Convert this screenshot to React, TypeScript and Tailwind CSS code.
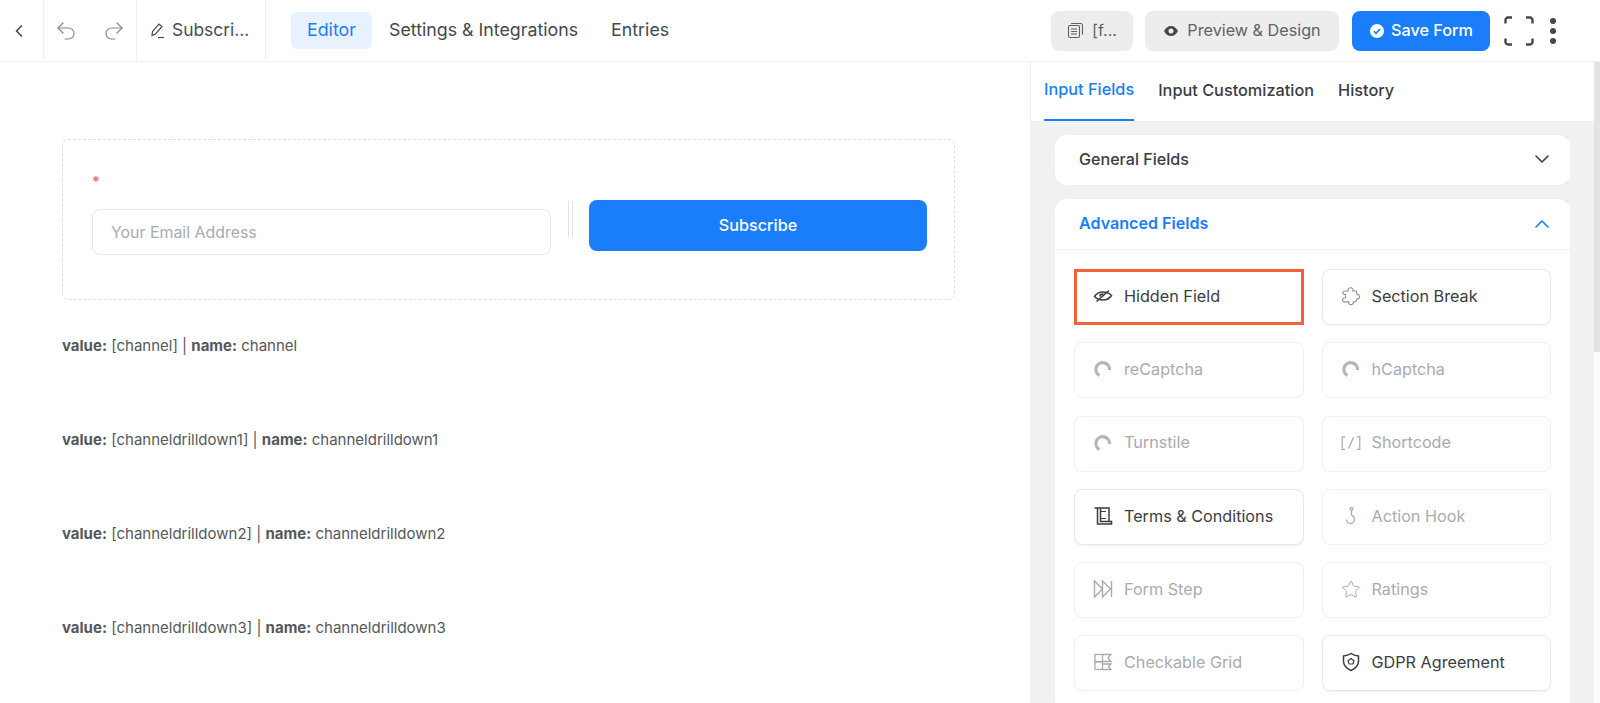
import { ChevronDown, ChevronLeft, ChevronUp, Star, Undo2, Redo2 } from "lucide-react";

const FIELDS = [
  { label: "Hidden Field", icon: "hidden", active: true, marked: true },
  { label: "Section Break", icon: "puzzle", active: true },
  { label: "reCaptcha", icon: "captcha" },
  { label: "hCaptcha", icon: "captcha" },
  { label: "Turnstile", icon: "captcha" },
  { label: "Shortcode", icon: "shortcode" },
  { label: "Terms & Conditions", icon: "terms", active: true },
  { label: "Action Hook", icon: "hook" },
  { label: "Form Step", icon: "step" },
  { label: "Ratings", icon: "star" },
  { label: "Checkable Grid", icon: "grid" },
  { label: "GDPR Agreement", icon: "shield", active: true },
];

const VALUES = ["channel", "channeldrilldown1", "channeldrilldown2", "channeldrilldown3"];

function FieldIcon({ name }: { name: string }) {
  if (name === "hidden") {
    return (
      <svg width="20" height="20" viewBox="0 0 20 20" fill="none" stroke="currentColor" strokeWidth="1.600">
        <path d="M1.500 10.500c2-3 5-4.500 8.500-4.500 3 0 6 1 8.500 3.500-2 3-5 4.500-8.500 4.500-3 0-6-1-8.500-3.500z" />
        <path d="M7 10.500c0-1.500 1.500-2.500 3.500-2.500" />
        <path d="M3.500 15.500L16 4.500" />
      </svg>
    );
  }
  if (name === "puzzle") {
    return (
      <svg width="22" height="22" viewBox="0 0 22 22" fill="none" stroke="#8f9195" strokeWidth="1.200">
        <path d="M8 5.500c-1-2 .5-3.500 2.500-3.500s3.500 1.500 2.500 3.500h4l.5 4c2-.5 3 1 3 2.500s-1.500 2.500-3 2l-1 3-3 .5c.5 2-1 3-2.500 3s-3-1-2.500-3H3c-1.500-.5-1.500-2-1-3 .5-1 1.500-1.500 3-1.500V9.500c-2 0-3-1-3-2s.5-2 2-2z" />
      </svg>
    );
  }
  if (name === "captcha") {
    return (
      <svg width="20" height="20" viewBox="0 0 20 20" fill="none" stroke="#b4b5b8" strokeWidth="3.200">
        <path d="M6.500 16.500A6.800 6.800 0 1 1 16.500 11" />
      </svg>
    );
  }
  if (name === "shortcode") {
    return (
      <svg width="24" height="20" viewBox="0 0 24 20" fill="none" stroke="currentColor" strokeWidth="1.500">
        <path d="M5 2.500H1.500v15H5M19 2.500h3.500v15H19M15 3.500l-6 13" />
      </svg>
    );
  }
  if (name === "terms") {
    return (
      <svg width="20" height="20" viewBox="0 0 20 20" fill="none" stroke="currentColor" strokeWidth="1.500">
        <path d="M1.500 2H16v13.500M4.500 2v16H18.500v-2.500H7.500V2" />
        <path d="M7.500 5.500H13M7.500 12.500H13" strokeWidth="1" />
      </svg>
    );
  }
  if (name === "hook") {
    return (
      <svg width="20" height="20" viewBox="0 0 20 20" fill="none" stroke="currentColor" strokeWidth="1.300">
        <circle cx="10.500" cy="2.800" r="1.400" />
        <path d="M10.500 4.200V9c2 1 3 2.500 3 4.500a4 4 0 0 1-8 0" />
      </svg>
    );
  }
  if (name === "step") {
    return (
      <svg width="20" height="20" viewBox="0 0 20 20" fill="none" stroke="currentColor" strokeWidth="1.400">
        <path d="M1.500 2v16l8-8zM9.500 2v16l8-8zM18.500 2v16" />
      </svg>
    );
  }
  if (name === "star") return <Star size={21} strokeWidth={1.2} />;
  if (name === "grid") {
    return (
      <svg width="20" height="20" viewBox="0 0 20 20" fill="none" stroke="currentColor" strokeWidth="1.300">
        <rect x="2" y="2.500" width="7.500" height="7" />
        <rect x="2" y="10" width="7.500" height="7.500" />
        <path d="M9.500 2.500H18L15 6l3 3.500H9.500M9.500 12H18l-2.500 2.500L18 17.500H9.500" />
      </svg>
    );
  }
  return (
    <svg width="20" height="20" viewBox="0 0 20 20" fill="none" stroke="currentColor" strokeWidth="1.500">
      <path d="M10 1.500c2 1.500 4.500 2.300 7.500 2.500v5c0 4.500-3 7.500-7.500 9.500-4.500-2-7.500-5-7.500-9.500V4c3-.2 5.500-1 7.500-2.500z" />
      <path d="M10 6.500l3 2.200-1.100 3.300H8.100L7 8.700z" strokeWidth="1.200" />
    </svg>
  );
}

function FieldButton({ field }: { field: (typeof FIELDS)[number] }) {
  return (
    <div
      className={
        "flex h-14 items-center gap-[11px] pb-[2px] text-[16.2px] " +
        (field.marked
          ? "border-[3px] border-[#f4623a] pl-[16px] text-[#3a3d42] "
          : field.active
            ? "rounded-lg border border-[#e7e8ea] pl-[18px] text-[#3a3d42] shadow-[0_1px_2px_rgba(0,0,0,0.06)] "
            : "rounded-lg border border-[#f0f0f1] pl-[18px] text-[#a9abaf] ")
      }
    >
      <span className="flex w-5 shrink-0 justify-center">
        <FieldIcon name={field.icon} />
      </span>
      <span>{field.label}</span>
    </div>
  );
}

export default function App() {
  return (
    <div className="flex h-[703px] flex-col overflow-hidden bg-white font-['Inter',sans-serif] text-[#3a3d42]">
      {/* top bar */}
      <header className="flex h-[62px] shrink-0 items-center border-b border-[#efefef]">
        <div className="flex h-full w-11 items-center justify-start border-r border-[#f0f0f0] pl-[9px] text-[#45484d]">
          <ChevronLeft size={20} strokeWidth={2} />
        </div>
        <div className="flex h-full w-[93px] items-center justify-center gap-[24px] border-r border-[#f0f0f0] text-[#85888d]">
          <Undo2 size={24} strokeWidth={1.2} />
          <Redo2 size={24} strokeWidth={1.2} />
        </div>
        <div className="flex h-full w-[129px] items-center gap-[5px] border-r border-[#f0f0f0] pl-[12px] text-[17.400px] text-[#4a4d52]">
          <svg width="18" height="18" viewBox="0 0 18 18" fill="none" stroke="currentColor" strokeWidth="1.200">
            <path d="M3 13.500l.5-4L10 2l3 2.500-6.500 7.500z" />
            <path d="M9 15.500h6" />
          </svg>
          <span>Subscri...</span>
        </div>
        <nav className="-mt-[1px] ml-[25px] flex items-center text-[17.800px]">
          <span className="flex h-[37px] w-[81px] items-center justify-center rounded-md bg-[#e8f2fe] text-[#1a7efb]">Editor</span>
          <span className="ml-[17px] text-[#45484d]">Settings & Integrations</span>
          <span className="ml-[33px] text-[#45484d]">Entries</span>
        </nav>
        <div className="ml-auto flex items-center text-[16.200px]">
          <div className="flex h-10 w-[82px] items-center justify-center gap-2 rounded-lg bg-[#ededed] text-[#606367]">
            <svg width="17" height="17" viewBox="0 0 17 17" fill="none" stroke="currentColor" strokeWidth="1.100">
              <rect x="1.500" y="3.500" width="11" height="12" rx="1.500" />
              <path d="M4 1.500h9.500a2 2 0 0 1 2 2v9M4 7h6M4 9.500h6M4 12h6" />
            </svg>
            <span>[f...</span>
          </div>
          <div className="ml-3 flex h-10 w-[194px] items-center justify-center gap-2 rounded-lg bg-[#ededed] text-[#606367]">
            <svg width="16" height="16" viewBox="0 0 16 16" fill="#45484d">
              <path d="M8 3c3 0 5.500 2 7 5-1.500 3-4 5-7 5s-5.500-2-7-5c1.500-3 4-5 7-5zm0 2.500a2.500 2.500 0 1 0 0 5 2.500 2.500 0 0 0 0-5z" />
            </svg>
            <span>Preview & Design</span>
          </div>
          <div className="ml-[13px] flex h-10 w-[138px] items-center justify-center gap-[6px] rounded-lg bg-[#1a7efb] font-medium text-white">
            <svg width="16" height="16" viewBox="0 0 16 16">
              <circle cx="8" cy="8" r="7" fill="#fff" />
              <path d="M4.800 8.200l2.200 2.200 4-4.400" fill="none" stroke="#1a7efb" strokeWidth="1.600" />
            </svg>
            <span>Save Form</span>
          </div>
          <svg className="ml-[14px]" width="30" height="30" viewBox="0 0 30 30" fill="none" stroke="#45484d" strokeWidth="2.400">
            <path d="M1.500 7.500V4a2.500 2.500 0 0 1 2.500-2.500h4M22 1.500h4A2.500 2.500 0 0 1 28.500 4v3.500M28.500 22.500V26a2.500 2.500 0 0 1-2.500 2.500h-4M8 28.500H4A2.500 2.500 0 0 1 1.500 26v-3.500" />
          </svg>
          <div className="ml-[16px] mr-[44px] flex flex-col gap-[4px]">
            <span className="h-[6px] w-[6px] rounded-full bg-[#45484d]" />
            <span className="h-[6px] w-[6px] rounded-full bg-[#45484d]" />
            <span className="h-[6px] w-[6px] rounded-full bg-[#45484d]" />
          </div>
        </div>
      </header>

      <div className="flex min-h-0 flex-1">
        {/* form canvas */}
        <main className="min-w-0 flex-1 pl-[62px] pr-[75px] pt-[77px]">
          <div className="h-[161px] rounded-md border border-dashed border-[#dedfe1] pl-[29px] pr-[27px] pt-[39px]">
            <div className="h-[5px] text-[14px] font-bold leading-[5px] text-[#f56c6c]">*</div>
            <div className="mt-[16px] flex items-start">
              <div className="mt-[9px] flex h-[46px] w-[459px] shrink-0 items-center rounded-lg border border-[#e5e6e8] pl-[18px] pt-[2px] text-[15.900px] text-[#a8abb2]">
                Your Email Address
              </div>
              <div className="ml-[17px] mt-[1px] h-[36px] w-[5px] shrink-0 border-x border-[#e4e4e4]" />
              <div className="ml-[16px] flex h-[51px] w-[338px] shrink-0 items-center justify-center rounded-lg bg-[#1a7efb] text-[16.200px] font-medium text-white">
                Subscribe
              </div>
            </div>
          </div>
          <div className="mt-[36px] flex flex-col gap-[74px] text-[15px] leading-[20px] text-[#55585d]">
            {VALUES.map((v) => (
              <p key={v}>
                <b className="font-bold">value:</b> [{v}] | <b className="font-bold">name:</b> {v}
              </p>
            ))}
          </div>
        </main>

        {/* right panel */}
        <aside className="flex w-[570px] shrink-0 border-l border-[#efefef]">
          <div className="min-w-0 flex-1">
            <div className="flex h-[59px] gap-[24px] pl-[13px] text-[16.300px] font-medium">
              <span className="flex h-full items-center border-b-2 border-[#1a7efb] pb-[2px] text-[#1a7efb]">Input Fields</span>
              <span className="flex h-full items-center pb-[2px]">Input Customization</span>
              <span className="flex h-full items-center pb-[2px]">History</span>
            </div>
            <div className="h-full bg-[#f1f1f1] px-[24px] pt-[14px]">
              <div className="flex h-[50px] items-center justify-between rounded-xl bg-white pb-[2px] pl-[24px] pr-[16px] text-[16.100px] font-medium">
                General Fields
                <ChevronDown size={24} strokeWidth={1.6} />
              </div>
              <div className="mt-[14px] rounded-xl bg-white">
                <div className="flex h-[51px] items-center justify-between border-b border-[#efefef] pb-[1px] pl-[24px] pr-[16px] text-[16.100px] font-semibold text-[#1a7efb]">
                  Advanced Fields
                  <ChevronUp size={24} strokeWidth={1.6} />
                </div>
                <div className="grid grid-cols-2 gap-x-[18px] gap-y-[17.300px] px-[19px] pb-5 pt-[19px]">
                  {FIELDS.map((f) => (
                    <FieldButton key={f.label} field={f} />
                  ))}
                </div>
              </div>
            </div>
          </div>
          {/* scrollbar */}
          <div className="w-[6px] shrink-0 bg-[#fafafa]">
            <div className="h-[290px] w-full bg-[#e3e3e3]" />
          </div>
        </aside>
      </div>
    </div>
  );
}
